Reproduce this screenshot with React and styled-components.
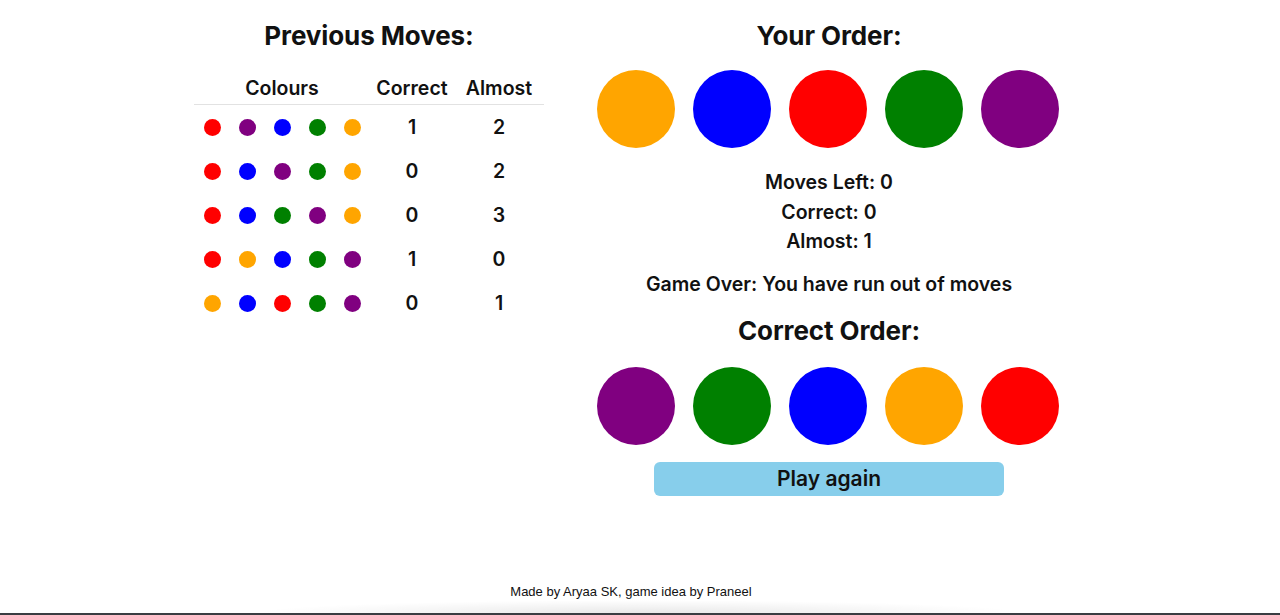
import styled, { createGlobalStyle } from "styled-components";

const GlobalStyle = createGlobalStyle`
  html, body {
    margin: 0;
    padding: 0;
    background: #fff;
  }
  body {
    font-family: Inter, "Noto Sans", sans-serif;
    color: #111;
  }
`;

const Page = styled.div`
  min-height: 615px;
  display: flex;
  flex-direction: column;
  overflow: hidden;
`;

const Board = styled.main`
  display: flex;
  justify-content: center;
  align-items: flex-start;
  gap: 28px;
  padding-top: 21px;
`;

const Column = styled.section`
  width: ${(p) => p.$width}px;
  display: flex;
  flex-direction: column;
  align-items: center;
`;

const Title = styled.h2`
  margin: 0;
  font-size: 26px;
  line-height: 30px;
  font-weight: 700;
  letter-spacing: -0.1px;
`;

const Table = styled.div`
  width: 350px;
  margin-top: 15px;
  display: grid;
  grid-template-columns: 176px 84px 90px;
`;

const HeadCell = styled.div`
  padding: 11px 0 5px;
  font-size: 19.5px;
  line-height: 22px;
  font-weight: 600;
  text-align: center;
  border-bottom: 1px solid #e2e2e2;
`;

const Cell = styled.div`
  height: 44px;
  display: flex;
  align-items: center;
  justify-content: center;
  font-size: 19.5px;
  font-weight: 600;
`;

const DotRow = styled.div`
  display: flex;
  gap: 18px;
`;

const Dot = styled.span`
  width: 17px;
  height: 17px;
  border-radius: 50%;
  background: ${(p) => p.$color};
`;

const Circles = styled.div`
  display: flex;
  gap: 18px;
  margin-top: ${(p) => p.$top}px;
  transform: translateX(-1px);
`;

const Circle = styled.div`
  width: 78px;
  height: 78px;
  border-radius: 50%;
  background: ${(p) => p.$color};
`;

const Stats = styled.div`
  margin-top: 20px;
  text-align: center;
`;

const Line = styled.p`
  margin: 0;
  font-size: 19.5px;
  line-height: 29.7px;
  font-weight: 600;
`;

const Message = styled(Line)`
  margin: 13px 0 16px;
`;

const PlayButton = styled.button`
  margin-top: 17px;
  width: 350px;
  height: 34px;
  border: none;
  border-radius: 6px;
  background: #87ceeb;
  color: #111;
  font-family: Inter, sans-serif;
  font-size: 21px;
  font-weight: 600;
  cursor: pointer;
`;

const Footer = styled.footer`
  margin-top: auto;
  display: flex;
  justify-content: center;
  padding-right: 18px;
  font-family: "Liberation Sans", Arial, sans-serif;
  font-size: 13px;
  line-height: 16px;
  color: #111;
`;

const Shade = styled.div`
  height: 13px;
  margin: 0 250px;
  background: radial-gradient(ellipse at 50% 100%, rgba(0, 0, 0, 0.09), rgba(0, 0, 0, 0) 70%);
`;

const Edge = styled.div`
  height: 2px;
  background: #3a3d42;
`;

const COLORS = {
  orange: "#ffa500",
  blue: "#0000ff",
  red: "#ff0000",
  green: "#008000",
  purple: "#800080",
};

const moves = [
  { colours: ["red", "purple", "blue", "green", "orange"], correct: 1, almost: 2 },
  { colours: ["red", "blue", "purple", "green", "orange"], correct: 0, almost: 2 },
  { colours: ["red", "blue", "green", "purple", "orange"], correct: 0, almost: 3 },
  { colours: ["red", "orange", "blue", "green", "purple"], correct: 1, almost: 0 },
  { colours: ["orange", "blue", "red", "green", "purple"], correct: 0, almost: 1 },
];

const yourOrder = ["orange", "blue", "red", "green", "purple"];
const correctOrder = ["purple", "green", "blue", "orange", "red"];

export default function App() {
  return (
    <Page>
      <GlobalStyle />
      <Board>
        <Column $width={350}>
          <Title>Previous Moves:</Title>
          <Table>
            <HeadCell>Colours</HeadCell>
            <HeadCell>Correct</HeadCell>
            <HeadCell>Almost</HeadCell>
            {moves.map((m, i) => [
              <Cell key={`c${i}`}>
                <DotRow>
                  {m.colours.map((c, j) => (
                    <Dot key={j} $color={COLORS[c]} />
                  ))}
                </DotRow>
              </Cell>,
              <Cell key={`r${i}`}>{m.correct}</Cell>,
              <Cell key={`a${i}`}>{m.almost}</Cell>,
            ])}
          </Table>
        </Column>

        <Column $width={514}>
          <Title>Your Order:</Title>
          <Circles $top={19}>
            {yourOrder.map((c) => (
              <Circle key={c} $color={COLORS[c]} />
            ))}
          </Circles>
          <Stats>
            <Line>Moves Left: 0</Line>
            <Line>Correct: 0</Line>
            <Line>Almost: 1</Line>
            <Message>Game Over: You have run out of moves</Message>
          </Stats>
          <Title>Correct Order:</Title>
          <Circles $top={21}>
            {correctOrder.map((c) => (
              <Circle key={c} $color={COLORS[c]} />
            ))}
          </Circles>
          <PlayButton>Play again</PlayButton>
        </Column>
      </Board>

      <Footer>Made by Aryaa SK, game idea by Praneel</Footer>
      <Shade />
      <Edge />
    </Page>
  );
}
